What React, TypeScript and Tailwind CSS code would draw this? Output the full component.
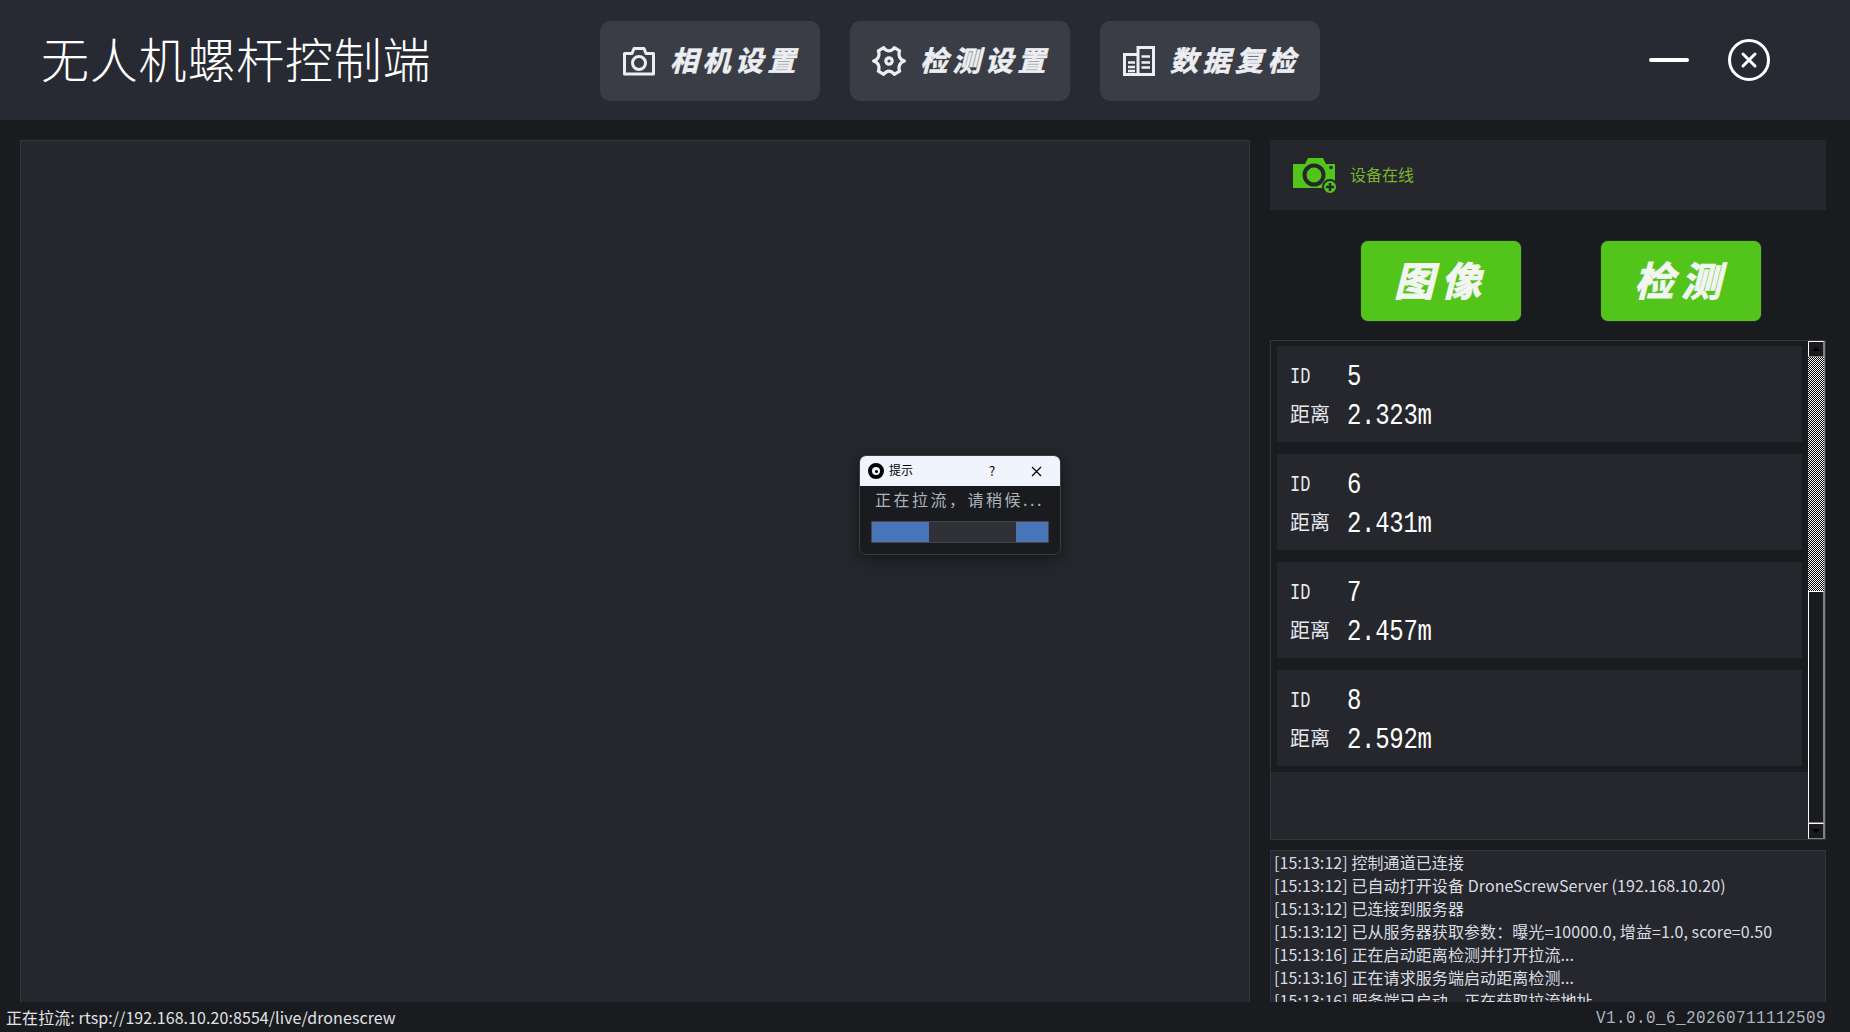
import React from 'react';

const CJK = "font-['Noto_Sans_CJK_SC',sans-serif]";
const MONO = "font-['Liberation_Mono','Noto_Sans_CJK_SC',monospace]";

const detections = [
  { id: 5, distance: '2.323m' },
  { id: 6, distance: '2.431m' },
  { id: 7, distance: '2.457m' },
  { id: 8, distance: '2.592m' },
];

const logs = [
  '[15:13:12] 控制通道已连接',
  '[15:13:12] 已自动打开设备 DroneScrewServer (192.168.10.20)',
  '[15:13:12] 已连接到服务器',
  '[15:13:12] 已从服务器获取参数：曝光=10000.0, 增益=1.0, score=0.50',
  '[15:13:16] 正在启动距离检测并打开拉流...',
  '[15:13:16] 正在请求服务端启动距离检测...',
  '[15:13:16] 服务端已启动，正在获取拉流地址',
];

function CameraIcon() {
  return (
    <svg width="32" height="30" viewBox="0 0 32 30" fill="none" stroke="#eceef2" strokeWidth="3">
      <path d="M1.5 7.5H9L11 2.5H21L23 7.5H30.5V28H1.5Z" strokeLinejoin="round" />
      <circle cx="16" cy="17" r="6.5" />
    </svg>
  );
}

function GearIcon() {
  return (
    <svg className="-mx-[1px]" width="34" height="34" viewBox="0 0 32 32" fill="none" stroke="#eceef2" strokeWidth="3" strokeLinejoin="round">
      <path d="M11 3.500C12.500 5.500 14.500 6.500 16 6.500S19.500 5.500 21 3.500L26 6.500C25 9 25.500 11 26 12.300S27.500 15 30.500 16C27.500 17 26.500 18.500 26 19.700S25 23 26 25.500L21 28.500C19.500 26.500 17.500 25.500 16 25.500S12.500 26.500 11 28.500L6 25.500C7 23 6.500 21 6 19.700S4.500 17 1.500 16C4.500 15 5.500 13.500 6 12.300S7 9 6 6.500Z" />
      <circle cx="16" cy="16" r="3" />
    </svg>
  );
}

function ChartIcon() {
  return (
    <svg width="32" height="30" viewBox="0 0 32 30" fill="none" stroke="#eceef2" strokeWidth="3">
      <path d="M15 8.500H1.500V28.500H30.500V1.500H15V28.500" />
      <path d="M5 16.500H12M5 21H12M5 25H12M18.500 10.500H27M18.500 16.500H27M18.500 21.500H27" strokeWidth="2.500" />
    </svg>
  );
}

function HeaderButton({ icon, label }: { icon: React.ReactNode; label: string }) {
  return (
    <button className="flex h-[80px] w-[220px] items-center gap-[15px] rounded-[10px] bg-[#3a3d46] pl-[23px]">
      {icon}
      <span className="pb-[4px] text-[28px] font-bold italic tracking-[4.500px] text-[#eceef2] [-webkit-text-stroke:0.6px_#eceef2]">{label}</span>
    </button>
  );
}

function ScrollButton({ up }: { up?: boolean }) {
  return (
    <div className="flex h-[16px] shrink-0 items-center justify-center border border-t-white border-l-white border-r-[#808080] border-b-[#808080] bg-[#191b1e]">
      <div
        className={
          up
            ? 'h-0 w-0 border-x-[4px] border-b-[4px] border-x-transparent border-b-black'
            : 'h-0 w-0 border-x-[4px] border-t-[4px] border-x-transparent border-t-black'
        }
      />
    </div>
  );
}

function DetectionCard({ id, distance }: { id: number; distance: string }) {
  return (
    <div className="flex h-[96px] flex-col justify-center bg-[#25272c] pl-[13px] text-white">
      <div className="flex h-[39px] items-center pt-[6px]">
        <span className={`w-[57px] origin-left scale-y-[1.25] text-[17px] text-[#e6e8ec] ${MONO}`}>ID</span>
        <span className={`scale-y-[1.2] text-[24px] ${MONO}`}>{id}</span>
      </div>
      <div className="flex h-[39px] items-center pt-[1px]">
        <span className={`w-[57px] text-[20px] text-[#e6e8ec] ${CJK}`}>距离</span>
        <span className={`scale-y-[1.2] pt-[4px] text-[24px] tracking-[-0.3px] ${MONO}`}>{distance}</span>
      </div>
    </div>
  );
}

function LoadingDialog() {
  return (
    <div className="absolute left-[859px] top-[455px] h-[100px] w-[202px] overflow-hidden rounded-[7px] border border-[#3a3c42] bg-[#191b1e] shadow-[0_4px_16px_rgba(0,0,0,0.45)]">
      <div className={`flex h-[30px] items-center bg-[#f0f4fc] pl-[8px] text-[12px] text-black ${CJK}`}>
        <span className="flex h-[16px] w-[16px] items-center justify-center rounded-full border-[4px] border-black">
          <span className="h-[3px] w-[3px] rounded-full bg-black" />
        </span>
        <span className="ml-[5px] pb-[2px]">提示</span>
        <span className="ml-[76px] text-[13px]">?</span>
        <svg className="ml-[36px]" width="11" height="11" viewBox="0 0 11 11" stroke="#000" strokeWidth="1.200">
          <path d="M1 1L10 10M10 1L1 10" />
        </svg>
      </div>
      <div className={`pl-[15px] text-[16px] leading-[26px] tracking-[2.500px] text-[#a9b4bf] ${CJK}`}>正在拉流，请稍候...</div>
      <div className="ml-[11px] mt-[9px] flex h-[22px] w-[178px] justify-between border border-[#44464c] bg-[#2f3136]">
        <div className="w-[57px] bg-[#4874b8]" />
        <div className="w-[32px] bg-[#4874b8]" />
      </div>
    </div>
  );
}

export default function App() {
  return (
    <div className={`relative flex h-screen w-full flex-col overflow-hidden bg-[#191b1e] ${CJK}`}>
      <header className="flex h-[120px] shrink-0 items-center bg-[#272a33]">
        <h1 className="w-[600px] pb-[7px] pl-[41px] text-[48px] font-extralight leading-none tracking-[0.8px] text-white">无人机螺杆控制端</h1>
        <nav className="mt-[2px] flex gap-[30px]">
          <HeaderButton icon={<CameraIcon />} label="相机设置" />
          <HeaderButton icon={<GearIcon />} label="检测设置" />
          <HeaderButton icon={<ChartIcon />} label="数据复检" />
        </nav>
        <div className="ml-[329px] h-[4px] w-[40px] rounded-full bg-white" />
        <svg className="ml-[39px]" width="42" height="42" viewBox="0 0 42 42" fill="none" stroke="#fff" strokeWidth="3">
          <circle cx="21" cy="21" r="19.500" />
          <path d="M15 15L27 27M27 15L15 27" strokeLinecap="round" />
        </svg>
      </header>

      <main className="flex min-h-0 flex-1 gap-[20px] overflow-hidden pl-[20px] pr-[24px] pt-[20px]">
        <section className="h-[900px] w-[1230px] shrink-0 border border-[#34363c] bg-[#25272c]" />

        <aside className="flex min-h-0 w-[556px] flex-col">
          <div className="flex h-[70px] shrink-0 items-center bg-[#25272c] pl-[23px]">
            <svg className="mt-[2px]" width="44" height="36" viewBox="0 0 44 36">
              <path fill="#52c41a" d="M0 6H12L15 0H30L33 6H42V30H0Z" />
              <circle cx="21" cy="17" r="9.500" fill="none" stroke="#25272c" strokeWidth="4" />
              <circle cx="38" cy="9.500" r="1.800" fill="#25272c" />
              <circle cx="37" cy="29" r="7" fill="#52c41a" stroke="#25272c" strokeWidth="2" />
              <path d="M33 29H41M37 25V33" stroke="#25272c" strokeWidth="2.500" />
            </svg>
            <span className="mb-[2px] ml-[13px] text-[16px] text-[#7cb32e]">设备在线</span>
          </div>

          <div className="flex h-[130px] shrink-0 items-start gap-[78px] pl-[90px] pt-[30px]">
            <button className="h-[82px] w-[162px] rounded-[8px] border border-[#25272c] bg-[#52c41a] pb-[4px] text-[40px] font-bold italic leading-none tracking-[7px] text-[#f3f5f3] [-webkit-text-stroke:1px_#f3f5f3]">图像</button>
            <button className="h-[82px] w-[162px] rounded-[8px] border border-[#25272c] bg-[#52c41a] pb-[4px] text-[40px] font-bold italic leading-none tracking-[7px] text-[#f3f5f3] [-webkit-text-stroke:1px_#f3f5f3]">检测</button>
          </div>

          <div className="flex h-[500px] shrink-0 border border-[#34363c] bg-[#25272c]">
            <div className="min-w-0 flex-1">
              <div className="flex flex-col gap-[12px] bg-[#191b1e] pb-[6px] pl-[6px] pr-[6px] pt-[5px]">
                {detections.map((d) => (
                  <DetectionCard key={d.id} id={d.id} distance={d.distance} />
                ))}
              </div>
            </div>
            <div className="flex w-[17px] shrink-0 flex-col border-r border-[#808080]">
              <ScrollButton up />
              <div className="h-[234px] bg-[repeating-conic-gradient(#fff_0_25%,#000_0_50%)] bg-[length:2px_2px]" />
              <div className="flex-1 border border-t-white border-l-white border-r-[#808080] border-b-[#808080] bg-[#191b1e]" />
              <ScrollButton />
            </div>
          </div>

          <div className="mt-[10px] min-h-0 flex-1 overflow-hidden border border-[#34363c] border-b-0 bg-[#25272c] px-[3px] text-[16px] leading-[23px] tracking-[0.08px] text-[#d9dde3]">
            {logs.map((line, i) => (
              <div key={i} className="whitespace-nowrap">{line}</div>
            ))}
          </div>
        </aside>
      </main>

      <footer className="flex h-[30px] shrink-0 items-center justify-between pl-[6px] pr-[24px] text-[16px] tracking-[0.07px]">
        <span className="text-[#e0e3e8]">正在拉流: rtsp://192.168.10.20:8554/live/dronescrew</span>
        <span className={`scale-y-[1.15] pt-[2px] text-[16px] tracking-[0.400px] text-[#aab4c0] ${MONO}`}>V1.0.0_6_20260711112509</span>
      </footer>

      <LoadingDialog />
    </div>
  );
}
